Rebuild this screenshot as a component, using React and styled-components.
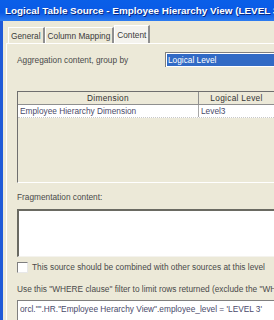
import styled, { createGlobalStyle } from 'styled-components';

const Global = createGlobalStyle`
  html, body {
    margin: 0;
    padding: 0;
    overflow: hidden;
    background: #ece9d8;
  }
  body {
    font-family: "Liberation Sans", Arial, sans-serif;
    font-size: 8.3px;
  }
`;

const Window = styled.div`
  width: 274px;
  height: 320px;
  overflow: hidden;
  display: flex;
  flex-direction: column;
  background: #ece9d8;
`;

const TitleBar = styled.div`
  height: 21px;
  flex-shrink: 0;
  display: flex;
  align-items: center;
  padding-left: 5px;
  background: linear-gradient(#0a5fe8 0%, #0a5ae6 60%, #2d7cf0 100%);
  color: #fff;
  font-family: "Liberation Sans", Arial, sans-serif;
  font-weight: bold;
  font-size: 9.9px;
  white-space: nowrap;
  text-shadow: 1px 1px 0 #0a2a80;
`;

const Frame = styled.div`
  flex: 1;
  display: flex;
  border-left: 3px solid #1f5ad8;
`;

const Body = styled.div`
  flex: 1;
  padding: 5px 0 0 3px;
  display: flex;
  flex-direction: column;
  min-width: 0;
`;

const Tabs = styled.div`
  display: flex;
  align-items: flex-end;
  height: 17px;
  padding-left: 2px;
`;

const Tab = styled.div`
  height: ${p => (p.$active ? '17px' : '15px')};
  display: flex;
  align-items: center;
  padding: 0 2px 0 2px;
  color: #3a3a3a;
  white-space: nowrap;
  background: ${p => (p.$active ? '#f4f3ee' : '#ece9d8')};
  border-top: 1px solid #fff;
  border-left: 1px solid #fff;
  border-right: 2px solid #8f8f8f;
`;

const Panel = styled.div`
  flex: 1;
  border-left: 1px solid #fff;
  border-top: 1px solid #fff;
  padding: 0 0 0 10px;
  display: flex;
  flex-direction: column;
  color: #4a4a4a;
  min-width: 0;
`;

const GroupRow = styled.div`
  display: flex;
  align-items: center;
  margin-top: 8px;
  height: 15px;
`;

const Label = styled.div`
  white-space: nowrap;
  color: #4a4a4a;
  margin-top: ${p => p.$mt || 0}px;
  height: ${p => p.$h || 12}px;
  line-height: ${p => p.$h || 12}px;
`;

const Select = styled.div`
  margin-left: auto;
  width: 109px;
  height: 15px;
  box-sizing: border-box;
  background: #fff;
  border-top: 1px solid #7f7f7f;
  border-left: 1px solid #7f7f7f;
  padding: 1px 0 1px 1px;
  flex-shrink: 0;
`;

const Selected = styled.div`
  height: 100%;
  background: #316ac5;
  color: #fff;
  line-height: 12px;
  padding-left: 1px;
  white-space: nowrap;
`;

const Table = styled.div`
  margin-top: 24px;
  height: 92px;
  box-sizing: border-box;
  flex-shrink: 0;
  border: 1px solid #6f6f6f;
  border-right: none;
  border-bottom: 1px solid #fff;
  display: flex;
  flex-direction: column;
  background: #ece9d8;
`;

const HeadRow = styled.div`
  display: grid;
  grid-template-columns: 181px 1fr;
  height: 12px;
  border-bottom: 1px solid #8f8f8f;
`;

const HeadCell = styled.div`
  text-align: center;
  line-height: 12px;
  color: #333;
  white-space: nowrap;
  overflow: hidden;
  border-right: ${p => (p.$last ? 'none' : '1px solid #8f8f8f')};
  letter-spacing: 0.3px;
`;

const DataRow = styled.div`
  display: grid;
  grid-template-columns: 181px 1fr;
  height: 12px;
  background: #fff;
  border-bottom: 1px dotted #c8c8c8;
`;

const Cell = styled.div`
  line-height: 12px;
  padding-left: 2px;
  color: #4a4a6a;
  white-space: nowrap;
  overflow: hidden;
  border-right: ${p => (p.$last ? 'none' : '1px solid #a8a8a8')};
`;

const TextArea = styled.div`
  margin-top: 6px;
  height: 48px;
  flex-shrink: 0;
  box-sizing: border-box;
  background: #fff;
  border-top: 2px solid #6a6a62;
  border-left: 2px solid #6a6a62;
  border-bottom: 1px solid #f4f3ee;
`;

const CheckRow = styled.label`
  display: flex;
  align-items: center;
  margin-top: 4px;
  height: 12px;
  white-space: nowrap;
  color: #4a4a4a;
`;

const Box = styled.span`
  width: 11px;
  height: 11px;
  box-sizing: border-box;
  background: #fff;
  border-top: 1px solid #7f7f7f;
  border-left: 1px solid #7f7f7f;
  border-right: 1px solid #e8e8e8;
  border-bottom: 1px solid #e8e8e8;
  margin-right: 4px;
  flex-shrink: 0;
`;

const Input = styled.div`
  margin-top: 5px;
  height: 22px;
  box-sizing: border-box;
  background: #fff;
  border-top: 1px solid #7f7f7f;
  border-left: 1px solid #7f7f7f;
  padding: 3px 0 0 2px;
  white-space: nowrap;
  color: #4a4a6a;
`;

export default function App() {
  return (
    <Window>
      <Global />
      <TitleBar>Logical Table Source - Employee Hierarchy View (LEVEL 3)</TitleBar>
      <Frame>
        <Body>
          <Tabs>
            <Tab>General</Tab>
            <Tab>Column Mapping</Tab>
            <Tab $active>Content</Tab>
          </Tabs>
          <Panel>
            <GroupRow>
              <Label>Aggregation content, group by</Label>
              <Select>
                <Selected>Logical Level</Selected>
              </Select>
            </GroupRow>
            <Table>
              <HeadRow>
                <HeadCell>Dimension</HeadCell>
                <HeadCell $last>Logical Level</HeadCell>
              </HeadRow>
              <DataRow>
                <Cell>Employee Hierarchy Dimension</Cell>
                <Cell $last>Level3</Cell>
              </DataRow>
            </Table>
            <Label $mt={8}>Fragmentation content:</Label>
            <TextArea />
            <CheckRow>
              <Box />
              This source should be combined with other sources at this level
            </CheckRow>
            <Label $mt={10}>Use this "WHERE clause" filter to limit rows returned (exclude the "WHERE")</Label>
            <Input>orcl."".HR."Employee Herarchy View".employee_level = 'LEVEL 3'</Input>
          </Panel>
        </Body>
      </Frame>
    </Window>
  );
}
